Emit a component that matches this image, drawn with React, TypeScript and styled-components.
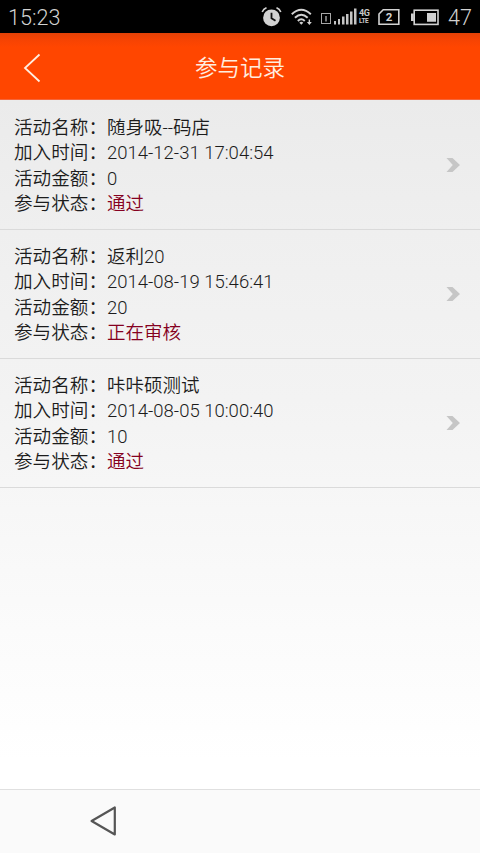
import React from "react";
import styled, { createGlobalStyle } from "styled-components";

const GlobalStyle = createGlobalStyle`
  * { box-sizing: border-box; }
  body { margin: 0; background: #fff; }
`;

const Screen = styled.div`
  width: 480px;
  height: 853px;
  display: flex;
  flex-direction: column;
  overflow: hidden;
  font-family: Roboto, "Noto Sans CJK SC", sans-serif;
  font-weight: 350;
  color: #1c1c1c;
`;

const StatusBar = styled.div`
  flex: none;
  height: 33px;
  padding: 1px 8px 0 8px;
  display: flex;
  align-items: center;
  justify-content: space-between;
  background: #000;
  color: #d2d2d2;
`;

const StatusText = styled.span<{ $width: number }>`
  width: ${(p) => p.$width}px;
  padding-top: 1px;
  font-size: 21.6px;
  font-weight: 300;
  line-height: 30px;
  white-space: nowrap;
`;

const StatusGroup = styled.div`
  display: flex;
  align-items: center;
  gap: 9px;
`;

const Signal = styled.div`
  display: flex;
  align-items: center;
  gap: 2px;
`;

const NetworkType = styled.div`
  width: 10px;
  display: flex;
  flex-direction: column;
  font-weight: 700;
  color: #c8c8c8;
`;

const NetworkLine = styled.span<{ $size: number; $height: number; $spacing: number }>`
  font-family: Roboto, sans-serif;
  font-size: ${(p) => p.$size}px;
  line-height: ${(p) => p.$height}px;
  letter-spacing: ${(p) => p.$spacing}px;
  white-space: nowrap;
`;

const Header = styled.header`
  flex: none;
  height: 67px;
  display: grid;
  grid-template-columns: 64px 1fr 64px;
  align-items: center;
  background: linear-gradient(#e24106 0, #f64303 7px, #ff4600 14px);
  border-bottom: 1px solid #f5653a;
  color: #ffeee0;
`;

const BackButton = styled.button`
  height: 66px;
  padding: 3px 0 0 23px;
  display: flex;
  align-items: center;
  border: 0;
  background: none;
`;

const Title = styled.h1`
  margin: 0;
  padding-top: 3px;
  text-align: center;
  font-size: 22.5px;
  line-height: 32px;
  font-weight: 350;
`;

const Content = styled.main`
  flex: 1;
  background: linear-gradient(#ebebeb 0, #efefef 130px, #f3f3f3 300px, #f7f7f7 410px, #fbfbfb 530px, #fff 660px);
`;

const Records = styled.ul`
  margin: 0;
  padding: 0;
  list-style: none;
`;

const Record = styled.li`
  height: 129px;
  padding: 14px 20px 0 14px;
  display: flex;
  justify-content: space-between;
  border-bottom: 1px solid #dadada;

  &:first-child {
    height: 130px;
    padding-top: 15px;
  }
`;

const Fields = styled.dl`
  margin: 0;
  padding-top: 1.2px;
`;

const Field = styled.div`
  display: flex;
  height: 25.2px;
  font-size: 18.6px;
  line-height: 25.2px;
  white-space: nowrap;
`;

const Label = styled.dt`
  width: 93px;
`;

const Value = styled.dd<{ $status?: boolean }>`
  margin: 0;
  font-size: 18.5px;
  color: ${(p) => (p.$status ? "#850020" : "inherit")};
`;

const RowArrow = styled.svg`
  margin-top: 43px;
`;

const NavBar = styled.nav`
  flex: none;
  height: 64px;
  padding: 0 0 2px 90px;
  display: flex;
  align-items: center;
  border-top: 1px solid #e0e0e0;
  background: #fafafa;
`;

const records = [
  { name: "随身吸--码店", time: "2014-12-31 17:04:54", amount: "0", status: "通过" },
  { name: "返利20", time: "2014-08-19 15:46:41", amount: "20", status: "正在审核" },
  { name: "咔咔硕测试", time: "2014-08-05 10:00:40", amount: "10", status: "通过" },
];

const AlarmIcon = () => (
  <svg width="21" height="20" viewBox="0.5 1 21 20" fill="none">
    <circle cx="11" cy="11.8" r="8.4" fill="#d2d2d2" />
    <path d="M1.7 6Q2.9 2.9 6 1.7M16 1.7Q19.1 2.9 20.3 6" stroke="#d2d2d2" strokeWidth="1.6" />
    <path d="M11 6.8V12.2L15 14.8" stroke="#111" strokeWidth="1.8" />
  </svg>
);

const WifiIcon = () => (
  <svg width="21" height="18" viewBox="0 0 21.4 18" fill="none">
    <path d="M.8 6.2Q10.5-3 20.2 6.2M4 9.8Q10.5 3.8 17 9.8M7 13Q10.5 9.6 14 13" stroke="#d2d2d2" strokeWidth="2" />
    <path d="M8.5 14.8Q10.5 13 12.5 14.8L10.5 17Z" fill="#d2d2d2" />
    <path d="M16.2 14.2H21.2L18.7 17.2ZM18 11.5H19.4V14.5H18Z" fill="#d2d2d2" />
  </svg>
);

const SignalIcon = () => (
  <Signal>
    <svg width="36" height="20" viewBox="0 0 36 20" fill="#c4c4c4">
      <rect x=".5" y="6.5" width="9" height="10" fill="none" stroke="#a8a8a8" />
      <rect x="4.4" y="9" width="1.2" height="5.5" />
      <rect x="13" y="14" width="2" height="3.5" />
      <rect x="17" y="12" width="2" height="5.5" />
      <rect x="21" y="9.5" width="2.5" height="8" />
      <rect x="25" y="7" width="2.5" height="10.5" />
      <rect x="29" y="4.5" width="2.5" height="13" />
      <rect x="33" y="1.5" width="2.5" height="16" />
    </svg>
    <NetworkType>
      <NetworkLine $size={9} $height={10} $spacing={-0.5}>4G</NetworkLine>
      <NetworkLine $size={6.5} $height={7.5} $spacing={-0.4}>LTE</NetworkLine>
    </NetworkType>
  </Signal>
);

const SimIcon = () => (
  <svg width="24" height="18" viewBox="0 0 24 18" fill="none">
    <path d="M5.2 1.8H20.8V16.2H1V6Z" stroke="#d2d2d2" strokeWidth="1.6" />
    <text x="11" y="13" textAnchor="middle" fill="#d2d2d2" fontFamily="Roboto, sans-serif" fontWeight="700" fontSize="11.5">2</text>
  </svg>
);

const BatteryIcon = () => (
  <svg width="28" height="17" viewBox="0 0 28 17" fill="none">
    <rect x="3.2" y="1.2" width="23.8" height="14.2" stroke="#d2d2d2" strokeWidth="1.6" />
    <path d="M0 4.5H2.8V12H0ZM16 4H25V12.8H16Z" fill="#d2d2d2" />
  </svg>
);

export default function App() {
  return (
    <>
      <GlobalStyle />
      <Screen>
        <StatusBar>
          <StatusText $width={60}>15:23</StatusText>
          <StatusGroup>
            <AlarmIcon />
            <WifiIcon />
            <SignalIcon />
            <SimIcon />
            <BatteryIcon />
            <StatusText $width={24}>47</StatusText>
          </StatusGroup>
        </StatusBar>
        <Header>
          <BackButton aria-label="返回">
            <svg width="19" height="30" viewBox="0 0 19 30" fill="none">
              <path d="M16.5 1.5L2 15L16.5 28.5" stroke="#ffeee0" strokeWidth="1.8" />
            </svg>
          </BackButton>
          <Title>参与记录</Title>
        </Header>
        <Content>
          <Records>
            {records.map((r) => (
              <Record key={r.time}>
                <Fields>
                  <Field><Label>活动名称：</Label><Value>{r.name}</Value></Field>
                  <Field><Label>加入时间：</Label><Value>{r.time}</Value></Field>
                  <Field><Label>活动金额：</Label><Value>{r.amount}</Value></Field>
                  <Field><Label>参与状态：</Label><Value $status>{r.status}</Value></Field>
                </Fields>
                <RowArrow width="14" height="14" viewBox="0 0 14 14">
                  <path d="M.5 0H6.5L14 7L6.5 14H.5L6.8 7Z" fill="#c6c6c6" />
                </RowArrow>
              </Record>
            ))}
          </Records>
        </Content>
        <NavBar>
          <svg width="27" height="30" viewBox="0 0 27 30" fill="none">
            <path d="M24.8 1.5V28.5L1.6 15Z" stroke="#555" strokeWidth="2.2" strokeLinejoin="round" />
          </svg>
        </NavBar>
      </Screen>
    </>
  );
}
